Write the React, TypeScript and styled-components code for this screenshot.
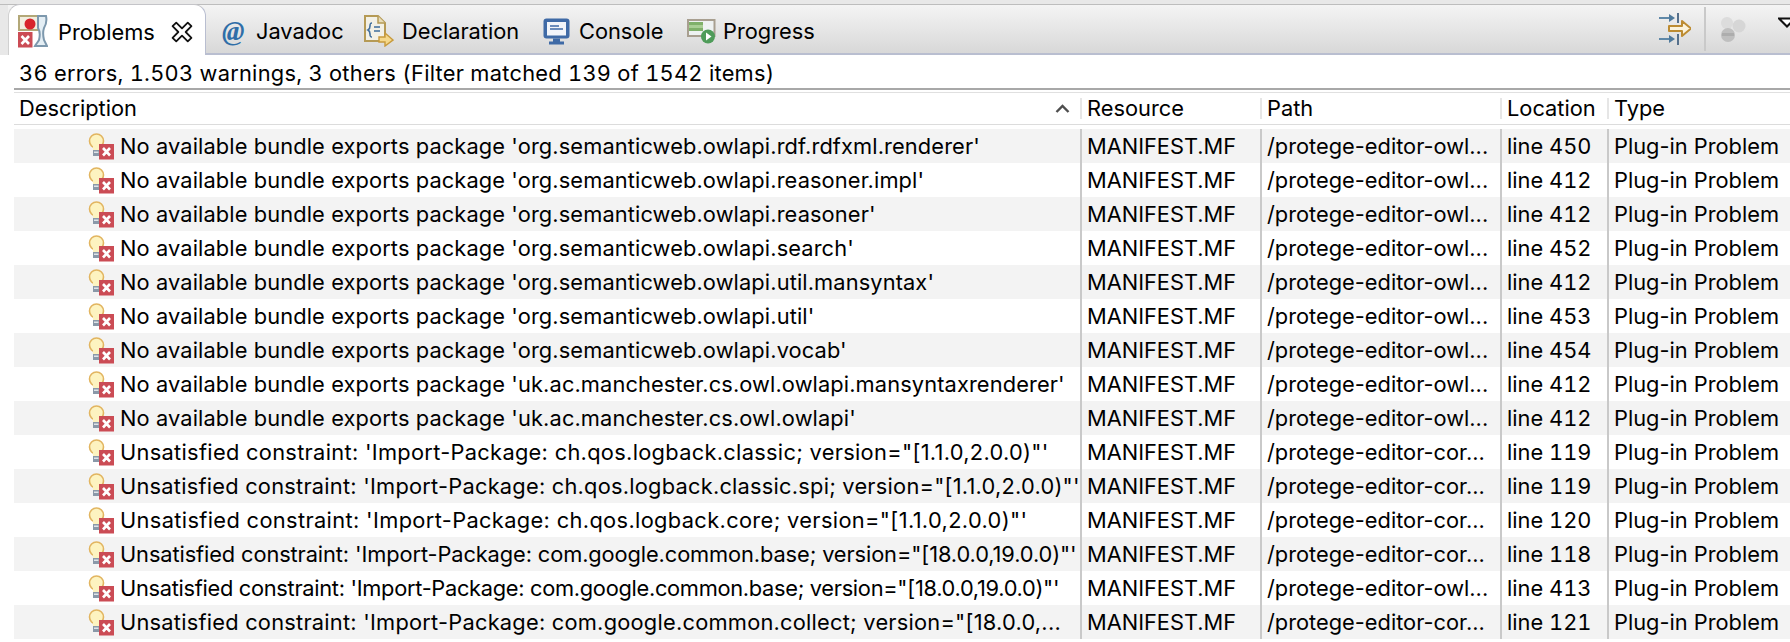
import React from 'react';
import styled, { createGlobalStyle } from 'styled-components';

const GlobalStyle = createGlobalStyle`
  html, body {
    margin: 0;
    padding: 0;
    background: #ffffff;
  }
  body {
    font-family: Inter, "Liberation Sans", sans-serif;
    font-size: 21.8px;
    color: #000000;
    overflow: hidden;
  }
`;

//#region Styled
const Page = styled.div`
  width: 1790px;
  height: 642px;
  overflow: hidden;
  display: flex;
  flex-direction: column;
`;

const TabBar = styled.div`
  height: 51px;
  margin-top: 4px;
  display: flex;
  align-items: stretch;
  box-sizing: border-box;
  border-top: 1.5px solid #bdbdbd;
  border-bottom: 2px solid #b9bed0;
  background: linear-gradient(#f4f4f4, #d8d8d8);
  box-shadow: 0 -4px 0 #e8e8e8;
  position: relative;
`;

const LeftGap = styled.div`
  width: 8px;
  margin-bottom: -2px;
  background: #e8e8e8;
`;

const ActiveTab = styled.div`
  width: 198px;
  margin-top: -1px;
  margin-bottom: -2px;
  box-sizing: border-box;
  padding: 3px 0 0 9px;
  display: flex;
  align-items: center;
  gap: 10px;
  background: #ffffff;
  border-radius: 12px 12px 0 0;
  border: 1.5px solid #c4c4c8;
  border-bottom: none;
  border-left-color: #d0d0d0;
  border-right-color: #b9bed0;
`;

const Tab = styled.div<{ $width: number }>`
  width: ${(p) => p.$width}px;
  box-sizing: border-box;
  padding-top: 4px;
  display: flex;
  align-items: center;
`;

const TabLabel = styled.span<{ $left: number }>`
  margin-left: ${(p) => p.$left}px;
  white-space: nowrap;
`;

const ActiveLabel = styled.span`
  white-space: nowrap;
`;

const TabIconBox = styled.div<{ $left: number }>`
  margin-left: ${(p) => p.$left}px;
  display: flex;
`;

const AtSign = styled.span`
  font-family: "Liberation Serif", serif;
  font-weight: 700;
  font-style: italic;
  font-size: 27px;
  line-height: 1;
  color: #2f6ea8;
  width: 24px;
`;

const CloseBox = styled.div`
  margin-left: 6px;
  display: flex;
`;

const Toolbar = styled.div`
  margin-left: auto;
  display: flex;
  align-items: center;
  height: 100%;
`;

const ToolbarSep = styled.div`
  width: 2px;
  height: 44px;
  margin: 0 13px;
  background: #c9c9c9;
`;

const MenuBox = styled.div`
  width: 44px;
  margin-bottom: 14px;
  display: flex;
  justify-content: flex-end;
`;

const Status = styled.div`
  height: 33px;
  box-sizing: border-box;
  padding: 3px 0 0 19px;
  display: flex;
  align-items: center;
  white-space: nowrap;
  letter-spacing: 0.27px;
  font-feature-settings: 'tnum';
`;

const Table = styled.div`
  margin-left: 14px;
  flex: 1;
  border-top: 2px solid #a8a8a8;
`;

const COLUMNS = '1068px 180px 240px 107px 1fr';

const HeaderRow = styled.div`
  margin-top: 2px;
  height: 33px;
  display: grid;
  grid-template-columns: ${COLUMNS};
  align-items: center;
  box-sizing: border-box;
  border-top: 1px solid #e0e0e0;
  border-bottom: 1.5px solid #dcdcdc;
`;

const HeaderCell = styled.div<{ $first?: boolean }>`
  height: 21px;
  display: flex;
  align-items: center;
  justify-content: space-between;
  box-sizing: border-box;
  padding-left: 5px;
  padding-right: 12px;
  padding-bottom: 1px;
  border-left: ${(p) => (p.$first ? 'none' : '2px solid #e6e6e6')};
  margin-left: ${(p) => (p.$first ? 0 : -2)}px;
  white-space: nowrap;
`;

const Rows = styled.div`
  padding-top: 4px;
`;

const Row = styled.div<{ $odd: boolean }>`
  height: 34px;
  display: grid;
  grid-template-columns: ${COLUMNS};
  align-items: stretch;
  background: ${(p) => (p.$odd ? '#f3f3f3' : '#ffffff')};
`;

const DescCell = styled.div`
  padding-left: 74px;
  display: flex;
  align-items: center;
  gap: 6px;
  white-space: nowrap;
  overflow: hidden;
`;

const DescText = styled.span<{ $spacing: number }>`
  letter-spacing: ${(p) => p.$spacing}px;
  padding-bottom: 1px;
`;

const Cell = styled.div<{ $numeric?: boolean }>`
  display: flex;
  align-items: center;
  box-sizing: border-box;
  padding: 0 0 1px 5px;
  margin-left: -2px;
  border-left: 2px solid #c9c9c9;
  white-space: nowrap;
  overflow: hidden;
  font-feature-settings: ${(p) => (p.$numeric ? "'tnum'" : 'normal')};
`;
//#endregion

const ProblemsIcon = () => (
  <svg width="30" height="33" viewBox="0 0 30 33">
    <path d="M1 1h20v14H1z" fill="#f2eee0" stroke="#b3a878" strokeWidth="2" />
    <path d="M20 1h8c1 5 0 9-2 12-1 3-1 8 0 12 1 2 2 4 3 6H17c1-2 3-4 4-6 1-4 1-9-1-12z" fill="#e4eef4" stroke="#7d98ad" strokeWidth="2" />
    <circle cx="12" cy="9" r="5.5" fill="#d8242c" />
    <rect x="0" y="17" width="14.5" height="15.5" fill="#cb4c55" />
    <path d="M3.5 21l7.5 8M11 21l-7.5 8" stroke="#ffffff" strokeWidth="2.6" />
  </svg>
);

const CloseIcon = () => (
  <svg width="22" height="22" viewBox="0 0 21 21">
    <path
      d="M1.5 5l3.5-3.5 5.5 5.5L16 1.5 19.5 5 14 10.5l5.5 5.5-3.5 3.5-5.5-5.5L5 19.5 1.5 16 7 10.5z"
      fill="#ffffff"
      stroke="#111111"
      strokeWidth="1.7"
      strokeLinejoin="round"
    />
  </svg>
);

const DeclarationIcon = () => (
  <svg width="30" height="32" viewBox="0 0 30 32">
    <path d="M1 1h13l7 7v18H1z" fill="#f3f1e6" stroke="#b59a55" strokeWidth="2" />
    <path d="M14 1v7h7" fill="#e7dcb8" stroke="#b59a55" strokeWidth="1.5" />
    <path d="M8 8c-2 0-2 1-2 3s0 3-2 4c2 1 2 2 2 4s0 3 2 3" fill="none" stroke="#3f6d9c" strokeWidth="1.6" />
    <path d="M10 12h6M10 16h6" stroke="#3f6d9c" strokeWidth="1.6" />
    <path d="M15 22h6v-4l8 7-8 6v-4h-6z" fill="#f5d88a" stroke="#c79a3c" strokeWidth="1.4" />
  </svg>
);

const ConsoleIcon = () => (
  <svg width="27" height="27" viewBox="0 0 27 27">
    <rect x="0.5" y="0.5" width="26" height="20" rx="3" fill="#3f6aa6" />
    <rect x="4" y="4" width="19" height="13.5" fill="#f2f5fa" />
    <path d="M7 8h9M7 11h13" stroke="#3f6aa6" strokeWidth="1.7" />
    <path d="M10 20.5h7v3h4v3H6v-3h4z" fill="#3f6aa6" />
  </svg>
);

const ProgressIcon = () => (
  <svg width="29" height="25" viewBox="0 0 29 25">
    <rect x="1" y="1" width="26.5" height="16" fill="#eef2f2" stroke="#a89f90" strokeWidth="2" />
    <rect x="2" y="3" width="14" height="9" fill="#7fb06a" />
    <rect x="2" y="6" width="14" height="3" fill="#a9cf95" />
    <circle cx="21" cy="17.5" r="7" fill="#4f9c5a" />
    <path d="M19 13.5l5.5 4-5.5 4z" fill="#ffffff" />
  </svg>
);

const PinIcon = () => (
  <svg width="32" height="32" viewBox="0 0 32 32">
    <path d="M0 5h13" stroke="#5f88a8" strokeWidth="2" />
    <path d="M10 1l6 4-6 4z" fill="#4f7a9c" />
    <path d="M19 0v10" stroke="#56708c" strokeWidth="2" />
    <path d="M0 26h13" stroke="#5f88a8" strokeWidth="2" />
    <path d="M10 22l6 4-6 4z" fill="#4f7a9c" />
    <path d="M19 21v11" stroke="#56708c" strokeWidth="2" />
    <path d="M10 13h13V8l9 7.5-9 7.5v-5H10z" fill="#fbf3dc" stroke="#bd8c32" strokeWidth="2" strokeLinejoin="round" />
  </svg>
);

const BallsIcon = () => (
  <svg width="27" height="26" viewBox="0 0 27 26">
    <circle cx="8" cy="7" r="6" fill="#dcdcdc" />
    <circle cx="20" cy="10" r="6.5" fill="#d6d6d6" />
    <circle cx="9" cy="19" r="7" fill="#bfbfbf" />
    <rect x="3" y="17" width="12" height="3" fill="#adadad" />
  </svg>
);

const MenuArrow = () => (
  <svg width="12" height="11" viewBox="0 0 12 11">
    <path d="M1 1.5h16L9 9.5z" fill="#ffffff" stroke="#111111" strokeWidth="2" />
  </svg>
);

const SortChevron = () => (
  <svg width="15" height="9" viewBox="0 0 15 9">
    <path d="M1.5 8l6-6 6 6" fill="none" stroke="#4e4e4e" strokeWidth="2.4" />
  </svg>
);

const ProblemIcon = () => (
  <svg width="26" height="27" viewBox="0 0 26 27" style={{ flex: 'none' }}>
    <circle cx="8.5" cy="8" r="7" fill="#fdf3c0" stroke="#e2b560" strokeWidth="1.6" />
    <path d="M5 13h7v4H5z" fill="#fdf3c0" />
    <rect x="5" y="17" width="6.5" height="6" fill="#8a98a8" />
    <rect x="6" y="18.5" width="4.5" height="1.5" fill="#e0e4e8" />
    <rect x="11" y="11" width="15" height="15.5" fill="#cb4c55" />
    <path d="M15 15l7 7.5M22 15l-7 7.5" stroke="#ffffff" strokeWidth="2.6" />
  </svg>
);

interface Problem {
  description: string;
  path: string;
  location: string;
  spacing: number;
}

const editorOwl = '/protege-editor-owl...';
const editorCore = '/protege-editor-cor...';
const exportsPkg = 'No available bundle exports package';
const importPkg = "Unsatisfied constraint: 'Import-Package:";

const PROBLEMS: Problem[] = [
  { description: `${exportsPkg} 'org.semanticweb.owlapi.rdf.rdfxml.renderer'`, path: editorOwl, location: 'line 450', spacing: 0.12 },
  { description: `${exportsPkg} 'org.semanticweb.owlapi.reasoner.impl'`, path: editorOwl, location: 'line 412', spacing: 0.12 },
  { description: `${exportsPkg} 'org.semanticweb.owlapi.reasoner'`, path: editorOwl, location: 'line 412', spacing: 0.12 },
  { description: `${exportsPkg} 'org.semanticweb.owlapi.search'`, path: editorOwl, location: 'line 452', spacing: 0.12 },
  { description: `${exportsPkg} 'org.semanticweb.owlapi.util.mansyntax'`, path: editorOwl, location: 'line 412', spacing: 0.12 },
  { description: `${exportsPkg} 'org.semanticweb.owlapi.util'`, path: editorOwl, location: 'line 453', spacing: 0.12 },
  { description: `${exportsPkg} 'org.semanticweb.owlapi.vocab'`, path: editorOwl, location: 'line 454', spacing: 0.12 },
  { description: `${exportsPkg} 'uk.ac.manchester.cs.owl.owlapi.mansyntaxrenderer'`, path: editorOwl, location: 'line 412', spacing: 0.12 },
  { description: `${exportsPkg} 'uk.ac.manchester.cs.owl.owlapi'`, path: editorOwl, location: 'line 412', spacing: 0.12 },
  { description: `${importPkg} ch.qos.logback.classic; version="[1.1.0,2.0.0)"'`, path: editorCore, location: 'line 119', spacing: 0.31 },
  { description: `${importPkg} ch.qos.logback.classic.spi; version="[1.1.0,2.0.0)"'`, path: editorCore, location: 'line 119', spacing: 0.24 },
  { description: `${importPkg} ch.qos.logback.core; version="[1.1.0,2.0.0)"'`, path: editorCore, location: 'line 120', spacing: 0.36 },
  { description: `${importPkg} com.google.common.base; version="[18.0.0,19.0.0)"'`, path: editorCore, location: 'line 118', spacing: -0.1 },
  { description: `${importPkg} com.google.common.base; version="[18.0.0,19.0.0)"'`, path: editorOwl, location: 'line 413', spacing: -0.29 },
  { description: `${importPkg} com.google.common.collect; version="[18.0.0,...`, path: editorCore, location: 'line 121', spacing: 0.24 },
];

const App = () => {
  return (
    <Page>
      <GlobalStyle />
      <TabBar>
        <LeftGap />
        <ActiveTab>
          <ProblemsIcon />
          <ActiveLabel>Problems</ActiveLabel>
          <CloseBox>
            <CloseIcon />
          </CloseBox>
        </ActiveTab>
        <Tab $width={142}>
          <TabIconBox $left={16}>
            <AtSign>@</AtSign>
          </TabIconBox>
          <TabLabel $left={10}>Javadoc</TabLabel>
        </Tab>
        <Tab $width={195}>
          <TabIconBox $left={16}>
            <DeclarationIcon />
          </TabIconBox>
          <TabLabel $left={8}>Declaration</TabLabel>
        </Tab>
        <Tab $width={144}>
          <TabIconBox $left={0}>
            <ConsoleIcon />
          </TabIconBox>
          <TabLabel $left={9}>Console</TabLabel>
        </Tab>
        <Tab $width={160}>
          <TabIconBox $left={0}>
            <ProgressIcon />
          </TabIconBox>
          <TabLabel $left={7}>Progress</TabLabel>
        </Tab>
        <Toolbar>
          <PinIcon />
          <ToolbarSep />
          <BallsIcon />
          <MenuBox>
            <MenuArrow />
          </MenuBox>
        </Toolbar>
      </TabBar>
      <Status>36 errors, 1.503 warnings, 3 others (Filter matched 139 of 1542 items)</Status>
      <Table>
        <HeaderRow>
          <HeaderCell $first>
            Description
            <SortChevron />
          </HeaderCell>
          <HeaderCell>Resource</HeaderCell>
          <HeaderCell>Path</HeaderCell>
          <HeaderCell>Location</HeaderCell>
          <HeaderCell>Type</HeaderCell>
        </HeaderRow>
        <Rows>
          {PROBLEMS.map((problem, i) => (
            <Row key={i} $odd={i % 2 === 0}>
              <DescCell>
                <ProblemIcon />
                <DescText $spacing={problem.spacing}>{problem.description}</DescText>
              </DescCell>
              <Cell>MANIFEST.MF</Cell>
              <Cell>{problem.path}</Cell>
              <Cell $numeric>{problem.location}</Cell>
              <Cell>Plug-in Problem</Cell>
            </Row>
          ))}
        </Rows>
      </Table>
    </Page>
  );
};

export default App;
